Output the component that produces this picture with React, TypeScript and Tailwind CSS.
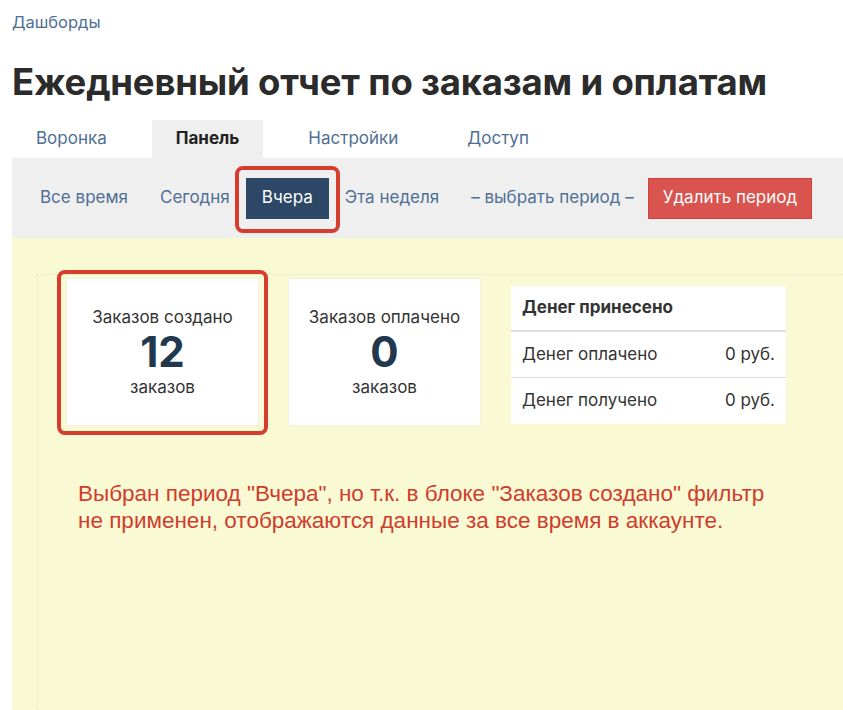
const font = { fontFamily: "Inter, 'Noto Sans', sans-serif" };

const tabs = ["Воронка", "Панель", "Настройки", "Доступ"];
const periods = ["Все время", "Сегодня", "Вчера", "Эта неделя", "– выбрать период –"];

function StatCard({ title, value, unit }: { title: string; value: string; unit: string }) {
  return (
    <div className="w-[193px] h-[148px] bg-white border border-[#f1f1e4] flex flex-col items-center justify-center text-[#333]">
      <div className="text-[17px] leading-[20px]">{title}</div>
      <div className="text-[42px] leading-[50px] font-bold text-[#22384f]">{value}</div>
      <div className="text-[17px] leading-[20px]">{unit}</div>
    </div>
  );
}

export default function App() {
  return (
    <div className="w-full h-[710px] overflow-hidden bg-white pl-3 flex flex-col" style={font}>
      <div className="pt-[12px] text-[16.5px] leading-[20px] text-[#4f6f94]">Дашборды</div>

      <h1 className="mt-[29px] text-[36.5px] leading-[42px] font-bold text-[#2b2b2b] tracking-[-0.2px]">
        Ежедневный отчет по заказам и оплатам
      </h1>

      <div className="mt-[17px] flex gap-[21px] h-[38px]">
        {tabs.map((t) => (
          <div
            key={t}
            className={`px-6 flex items-center text-[17px] ${
              t === "Панель" ? "bg-[#efefef] font-bold text-[#222]" : "text-[#4f6f94]"
            }`}
          >
            {t}
          </div>
        ))}
      </div>

      <div className="h-[80px] bg-[#efefef] pl-3 flex items-center">
        {periods.map((p) =>
          p === "Вчера" ? (
            <div key={p} className="relative">
              <div className="h-[41px] px-4 flex items-center bg-[#2c4866] text-white text-[17px]">{p}</div>
              <div className="absolute -inset-x-[11px] -top-[12px] -bottom-[14px] border-4 border-[#d63d2f] rounded-lg" />
            </div>
          ) : (
            <div key={p} className="h-[41px] px-4 flex items-center text-[17px] text-[#4f6f94]">
              {p}
            </div>
          )
        )}
        <div className="-ml-[2px] h-[41px] px-[14px] flex items-center bg-[#d9534f] text-white text-[17px] border border-[#d43f3a]">
          Удалить период
        </div>
      </div>

      <div className="flex-1 bg-[#f9f9d3] pl-[25px] pt-[36px]">
        <div className="h-full border-l border-t border-dotted border-[#e6e6c2] pl-[28px] pt-[3px]">
          <div className="flex items-start gap-[29px]">
            <div className="relative">
              <StatCard title="Заказов создано" value="12" unit="заказов" />
              <div className="absolute -left-[9px] -right-[9px] -top-[8px] -bottom-[9px] border-4 border-[#d63d2f] rounded-lg" />
            </div>
            <StatCard title="Заказов оплачено" value="0" unit="заказов" />
            <div className="ml-px mt-[8px] w-[275px] bg-white text-[17px] text-[#333]">
              <div className="h-[46px] px-[11px] flex items-center font-bold border-b-2 border-[#dddddd]">
                Денег принесено
              </div>
              <div className="h-[46px] px-[11px] flex items-center justify-between border-b border-[#dddddd]">
                <span>Денег оплачено</span>
                <span>0 руб.</span>
              </div>
              <div className="h-[46px] px-[11px] flex items-center justify-between">
                <span>Денег получено</span>
                <span>0 руб.</span>
              </div>
            </div>
          </div>

          <p
            className="mt-[54px] ml-[12px] text-[22.5px] leading-[27px] text-[#cf3d2e]"
            style={{ fontFamily: "'Liberation Sans', Arial, sans-serif" }}
          >
            Выбран период "Вчера", но т.к. в блоке "Заказов создано" фильтр
            <br />
            не применен, отображаются данные за все время в аккаунте.
          </p>
        </div>
      </div>
    </div>
  );
}
